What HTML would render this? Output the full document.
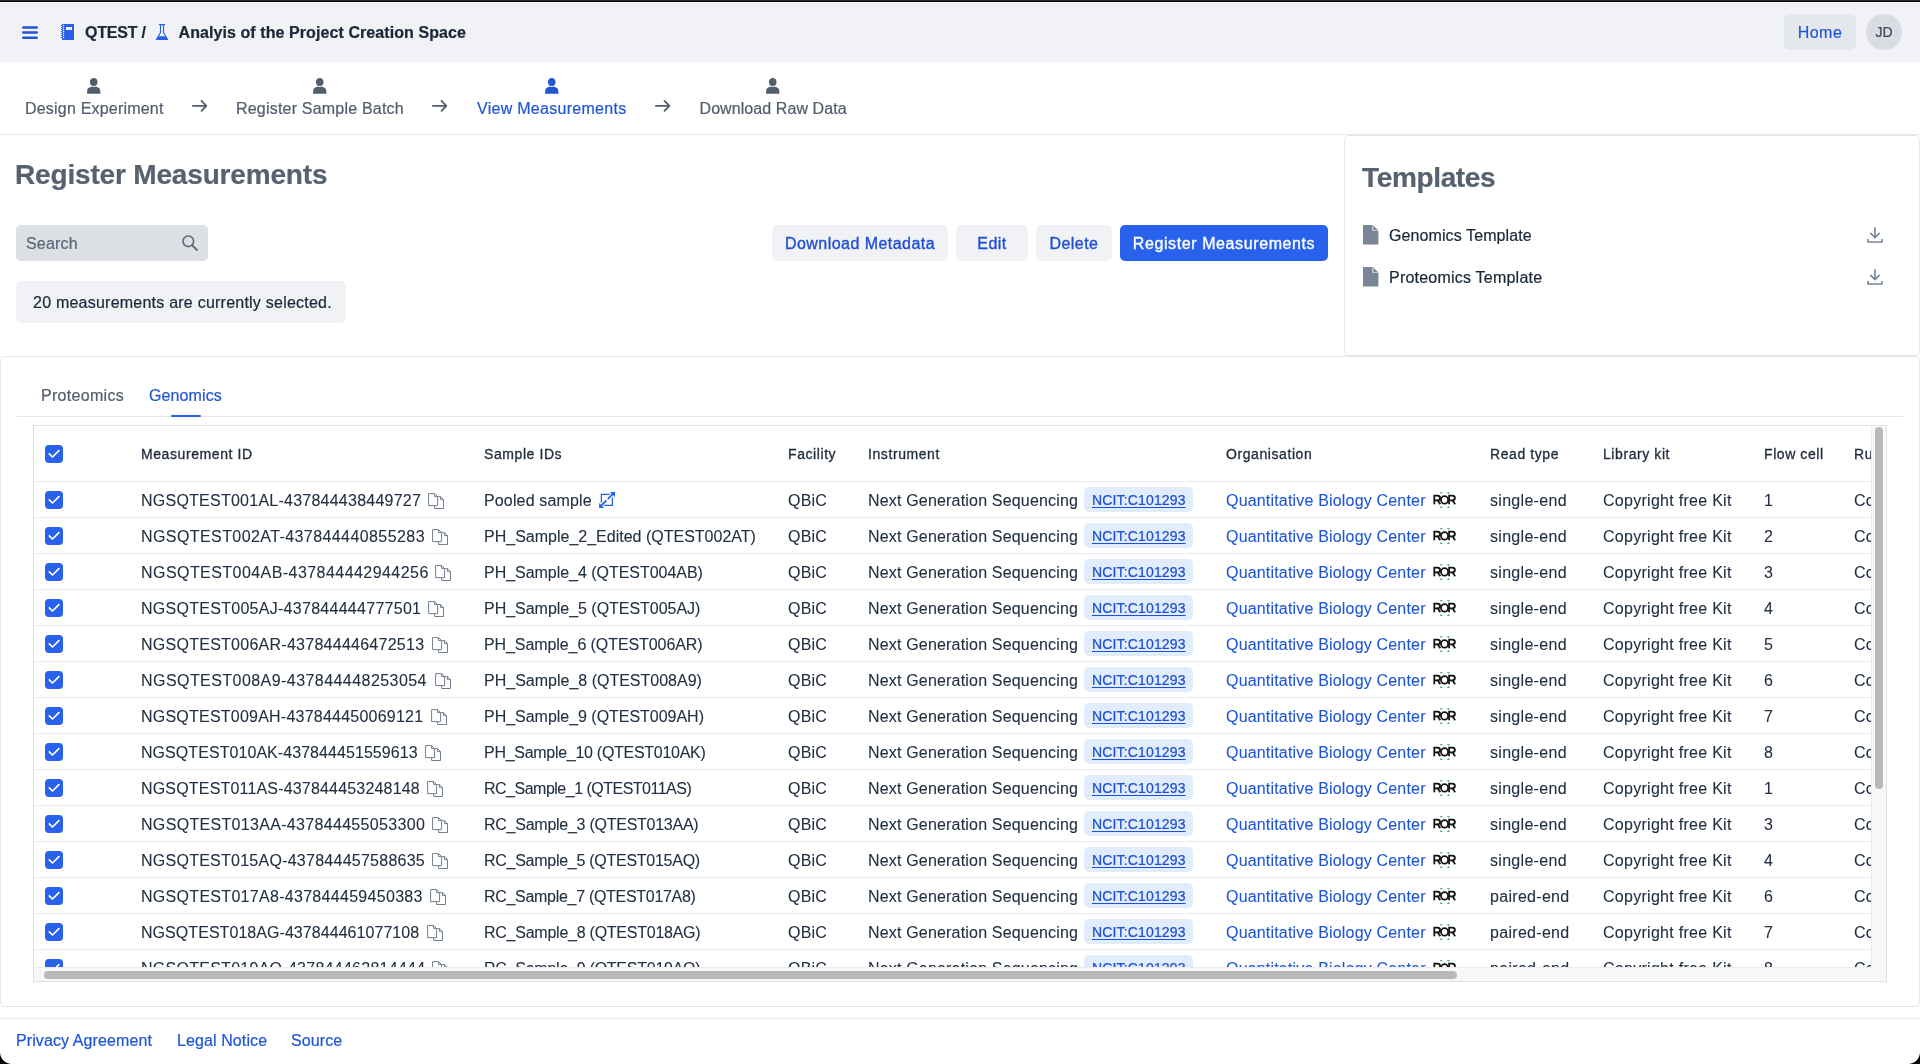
<!DOCTYPE html>
<html><head><meta charset="utf-8">
<style>
*{box-sizing:border-box;margin:0;padding:0}
html,body{width:1920px;height:1064px;overflow:hidden}
body{position:relative;background:#fff;font-family:"Liberation Sans",sans-serif;color:#1b2838;font-size:16px;letter-spacing:0.18px;-webkit-text-stroke:0.22px currentColor}
.a{position:absolute}
.t{position:absolute;white-space:nowrap;line-height:20px;height:20px}
svg{display:block}
#topbar{left:0;top:0;width:1920px;height:2px;background:linear-gradient(#28262f 0,#28262f 1px,#060606 1px,#060606 2px)}
#hdr{left:0;top:3px;width:1920px;height:59px;background:#f1f2f5}
.hb{font-weight:700;color:#1b2636;letter-spacing:0.08px}
.btn{position:absolute;height:36px;border-radius:5px;background:#f0f2f5;color:#1f4fd3;text-align:center;line-height:38px;white-space:nowrap;letter-spacing:0.45px;-webkit-text-stroke:0.35px currentColor}
.step{color:#535d6c;letter-spacing:0.2px}
.blue{color:#2356d4}
.h2{font-weight:700;font-size:28px;line-height:32px;height:32px;color:#57616f;letter-spacing:-0.35px}
.card{position:absolute;border:1px solid #e3e6eb;border-radius:5px}
#grid{position:absolute;left:34px;top:426px;width:1837px;height:541px;overflow:hidden}
.gh{position:absolute;top:18px;font-weight:400;font-size:14px;line-height:20px;color:#1f2b3b;letter-spacing:0.58px;-webkit-text-stroke:0.32px currentColor;white-space:nowrap}
.row{position:absolute;left:0;width:1837px;height:36px;border-bottom:1px solid #e7eaee}
.c{position:absolute;top:9px;white-space:nowrap;line-height:20px;height:20px;-webkit-text-stroke:0.1px currentColor;color:#223042}
.cb{position:absolute;left:11px;top:9px;width:18px;height:18px;border-radius:4px;background:#2862ec}
.cb svg{position:absolute;left:0;top:0}
.badge{position:absolute;left:1050px;top:5px;width:109px;height:25px;background:#e1ecfc;border-radius:5px;font-size:14px;color:#1d4fd8;text-decoration:underline;text-underline-offset:2px;line-height:26px;padding-left:8px;letter-spacing:0.15px}
.org{color:#1f56d6 !important}
.cp{position:absolute;top:11px}
.ror{position:absolute;left:1399px;top:9px}
</style></head><body><div id="wrap" style="position:absolute;left:0;top:0;width:1920px;height:1064px;overflow:hidden;will-change:transform">
<svg width="0" height="0" style="position:absolute"><defs>
<g id="copy" fill="none" stroke="#737f8f" stroke-width="1"><path d="M0.6 0.6H6.6L9.6 3.6V12.6H0.6Z M6.6 0.6V3.6H9.6"/><path d="M6.6 12.6V15.5H15.5V6.6L12.5 3.6H9.6 M12.5 3.6V6.6H15.5"/></g>
<g id="ror"><g fill="none" stroke="#111" stroke-width="1.75"><path d="M1.3 13.3V4.6H4.4C6.2 4.6 7.1 5.6 7.1 7C7.1 8.4 6.2 9.3 4.4 9.3H1.3M4.6 9.3L7.3 13.3"/><ellipse cx="11.55" cy="8.95" rx="3.55" ry="3.75"/><path d="M16.1 13.3V4.6H19.2C21 4.6 21.9 5.6 21.9 7C21.9 8.4 21 9.3 19.2 9.3H16.1M19.4 9.3L22.1 13.3"/></g>
<path fill="#53b99f" d="M6.6 0.9H9.8L8.2 3.1Z M13.9 0.9H17.1L15.5 3.1Z M8.2 14.8L9.8 17.1H6.6Z M15.5 14.8L17.1 17.1H13.9Z"/></g>
</defs></svg><div class="a" id="topbar"></div>
<div class="a" id="hdr"></div>
<svg class="a" style="left:20px;top:24px" width="20" height="18" viewBox="0 0 20 18">
<g stroke="#2352d6" stroke-width="2.5" stroke-linecap="round"><line x1="3.3" y1="3.5" x2="16.7" y2="3.5"/><line x1="3.3" y1="8.6" x2="16.7" y2="8.6"/><line x1="3.3" y1="13.7" x2="16.7" y2="13.7"/></g></svg>
<svg class="a" style="left:60px;top:24px" width="15" height="16" viewBox="0 0 15 16">
<path fill="#2a5fe8" d="M2 0H14V16H2Z"/>
<rect fill="#f1f2f5" x="6" y="3" width="6" height="3"/>
<g fill="#f1f2f5"><circle cx="3.5" cy="1.5" r="0.8"/><circle cx="3.5" cy="3.5" r="0.8"/><circle cx="3.5" cy="5.5" r="0.8"/><circle cx="3.5" cy="7.5" r="0.8"/><circle cx="3.5" cy="9.5" r="0.8"/><circle cx="3.5" cy="11.5" r="0.8"/><circle cx="3.5" cy="13.5" r="0.8"/></g>
<g fill="#2a5fe8"><rect x="0.8" y="1" width="1.5" height="1"/><rect x="0.8" y="3" width="1.5" height="1"/><rect x="0.8" y="5" width="1.5" height="1"/><rect x="0.8" y="7" width="1.5" height="1"/><rect x="0.8" y="9" width="1.5" height="1"/><rect x="0.8" y="11" width="1.5" height="1"/><rect x="0.8" y="13" width="1.5" height="1"/></g>
</svg>
<div class="t hb" style="left:85px;top:23px;letter-spacing:-0.2px">QTEST /</div>
<svg class="a" style="left:155px;top:24px" width="14" height="16" viewBox="0 0 14 16"><path fill="none" stroke="#2a5fe8" stroke-width="1.1" d="M5.5 1V8.6L1.6 15.3H12.4L8.5 8.6V1"/><path fill="#2a5fe8" d="M3.9 0H10.1V1.2H3.9Z M3.2 12.2H10.8L13 15.9H1Z"/></svg>
<div class="t hb" style="left:178.5px;top:23px">Analyis of the Project Creation Space</div>
<div class="btn" style="left:1784px;top:14px;width:72px;background:#e4e7eb;color:#1f56d6;letter-spacing:0.5px;line-height:38px;-webkit-text-stroke:0.2px currentColor">Home</div>
<div class="a" style="left:1866px;top:14px;width:36px;height:36px;border-radius:50%;background:#d9dde3;color:#3e4a5a;font-size:14px;text-align:center;line-height:36px;letter-spacing:0">JD</div>

<!-- stepper -->
<svg width="0" height="0" style="position:absolute"><defs>
<path id="user" d="M6.75 0C4.6 0 2.95 1.5 2.95 3.9C2.95 6 4 8.1 6.75 8.1C9.5 8.1 10.55 6 10.55 3.9C10.55 1.5 8.9 0 6.75 0Z M4.9 8.6L2.4 9.5C1.1 9.9 0.5 10.7 0.35 12L0 15.8H13.5L13.15 12C13 10.7 12.4 9.9 11.1 9.5L8.6 8.6C7.9 9.2 5.6 9.2 4.9 8.6Z"/>
<path id="arr" d="M0.9 6.9H14.3M9.5 1.9L14.4 6.9L9.5 11.9"/>
</defs></svg>
<svg class="a" style="left:87.2px;top:78px" width="14" height="16" viewBox="0 0 14 16"><use href="#user" fill="#535d6c"/></svg>
<div class="t step" style="left:25px;top:99px">Design Experiment</div>
<svg class="a" style="left:192px;top:99px" width="16" height="15" viewBox="0 0 16 15"><use href="#arr" fill="none" stroke="#535d6c" stroke-width="1.8" stroke-linecap="round" stroke-linejoin="round"/></svg>
<svg class="a" style="left:313.3px;top:78px" width="14" height="16" viewBox="0 0 14 16"><use href="#user" fill="#535d6c"/></svg>
<div class="t step" style="left:236px;top:99px">Register Sample Batch</div>
<svg class="a" style="left:432px;top:99px" width="16" height="15" viewBox="0 0 16 15"><use href="#arr" fill="none" stroke="#535d6c" stroke-width="1.8" stroke-linecap="round" stroke-linejoin="round"/></svg>
<svg class="a" style="left:545.3px;top:78px" width="14" height="16" viewBox="0 0 14 16"><use href="#user" fill="#2356d4"/></svg>
<div class="t step blue" style="left:477px;top:99px;color:#2356d4;letter-spacing:0.28px">View Measurements</div>
<svg class="a" style="left:654.5px;top:99px" width="16" height="15" viewBox="0 0 16 15"><use href="#arr" fill="none" stroke="#535d6c" stroke-width="1.8" stroke-linecap="round" stroke-linejoin="round"/></svg>
<svg class="a" style="left:766.3px;top:78px" width="14" height="16" viewBox="0 0 14 16"><use href="#user" fill="#535d6c"/></svg>
<div class="t step" style="left:699.5px;top:99px;letter-spacing:0.08px">Download Raw Data</div>
<div class="a" style="left:0;top:134px;width:1920px;height:1px;background:#e6e9ee"></div>

<!-- left section -->
<div class="t h2" style="left:15px;top:159px;letter-spacing:-0.17px">Register Measurements</div>
<div class="a" style="left:16px;top:225px;width:192px;height:36px;background:#dcdfe4;border-radius:5px"></div>
<div class="t" style="left:26px;top:234px;color:#5a6778">Search</div>
<svg class="a" style="left:181px;top:234px" width="18" height="18" viewBox="0 0 18 18"><circle cx="7.3" cy="7.3" r="5.3" fill="none" stroke="#5a6778" stroke-width="1.6"/><path d="M11.3 11.3L16 16" stroke="#5a6778" stroke-width="1.8" stroke-linecap="round"/></svg>
<div class="a" style="left:16px;top:281px;width:330px;height:41.5px;background:#f1f2f5;border-radius:5px"></div>
<div class="t" style="left:33px;top:293px;color:#1b2838;letter-spacing:0.23px">20 measurements are currently selected.</div>
<div class="btn" style="left:772px;top:225px;width:176px">Download Metadata</div>
<div class="btn" style="left:956px;top:225px;width:72px">Edit</div>
<div class="btn" style="left:1036px;top:225px;width:76px">Delete</div>
<div class="btn" style="left:1120px;top:225px;width:208px;background:#2862ec;color:#fff;letter-spacing:0.6px">Register Measurements</div>

<!-- templates card -->
<div class="card" style="left:1344px;top:135px;width:576px;height:221px"></div>
<div class="t h2" style="left:1362px;top:162px">Templates</div>
<svg width="0" height="0" style="position:absolute"><defs>
<path id="file" d="M0 0H9.5L15.4 5.8V19.5H0Z"/>
<g id="dl"><path d="M7.95 0.9V10.4M3.7 6.4L7.95 10.6L12.2 6.4" stroke-linecap="round" stroke-linejoin="round"/><path d="M0.95 12.1V14.95H14.95V12.1" stroke-linecap="butt" stroke-linejoin="miter"/></g>
</defs></svg>
<svg class="a" style="left:1363.3px;top:225.2px" width="16" height="20" viewBox="0 0 16 20"><use href="#file" fill="#7a8596"/><path d="M9.5 0V5.8H15.4" fill="#fff"/><path d="M10.3 0.5L15 5.2H10.3Z" fill="#7a8596"/></svg>
<div class="t" style="left:1389px;top:226px;color:#1b2838;letter-spacing:0.1px">Genomics Template</div>
<svg class="a" style="left:1867px;top:227px" width="16" height="16" viewBox="0 0 16 16"><use href="#dl" fill="none" stroke="#7a8596" stroke-width="1.6"/></svg>
<svg class="a" style="left:1363.3px;top:267.2px" width="16" height="20" viewBox="0 0 16 20"><use href="#file" fill="#7a8596"/><path d="M9.5 0V5.8H15.4" fill="#fff"/><path d="M10.3 0.5L15 5.2H10.3Z" fill="#7a8596"/></svg>
<div class="t" style="left:1389px;top:268px;color:#1b2838;letter-spacing:0.22px">Proteomics Template</div>
<svg class="a" style="left:1867px;top:269px" width="16" height="16" viewBox="0 0 16 16"><use href="#dl" fill="none" stroke="#7a8596" stroke-width="1.6"/></svg>

<!-- tabs card -->
<div class="card" style="left:0;top:356px;width:1920px;height:651px"></div>
<div class="t" style="left:41px;top:386px;color:#535d6c;letter-spacing:0.3px">Proteomics</div>
<div class="t" style="left:149px;top:386px;color:#2356d4;letter-spacing:0.12px">Genomics</div>
<div class="a" style="left:17px;top:416px;width:1886px;height:1px;background:#e3e6eb"></div>
<div class="a" style="left:171px;top:415px;width:30px;height:2px;border-radius:1px;background:#2862ec"></div>
<div class="a" style="left:33px;top:425px;width:1854px;height:557px;border:1px solid #dde1e6"></div>
<div id="grid">
<div class="row" style="top:0;height:56px"><div class="cb" style="top:19px"><svg width="18" height="18" viewBox="0 0 18 18"><path d="M4.3 8.9L7.5 12L13.9 5.6" fill="none" stroke="#fff" stroke-width="1.7" stroke-linecap="round" stroke-linejoin="round"/></svg></div><div class="gh" style="left:107px">Measurement ID</div><div class="gh" style="left:450px">Sample IDs</div><div class="gh" style="left:754px">Facility</div><div class="gh" style="left:834px">Instrument</div><div class="gh" style="left:1192px">Organisation</div><div class="gh" style="left:1456px">Read type</div><div class="gh" style="left:1569px">Library kit</div><div class="gh" style="left:1730px">Flow cell</div><div class="gh" style="left:1820px">Run</div></div>
<div class="row" style="top:56px"><div class="cb"><svg width="18" height="18" viewBox="0 0 18 18"><path d="M4.3 8.9L7.5 12L13.9 5.6" fill="none" stroke="#fff" stroke-width="1.7" stroke-linecap="round" stroke-linejoin="round"/></svg></div><div class="c" style="left:107px;letter-spacing:0.244px">NGSQTEST001AL-437844438449727</div><svg class="cp" style="left:394.0px" width="17" height="17" viewBox="0 0 17 17"><use href="#copy"/></svg><div class="c sid" style="left:450px;letter-spacing:0.147px">Pooled sample</div><svg class="a" style="left:565px;top:9px" width="18" height="18" viewBox="0 0 18 18"><path d="M10.7 3.4H2.4V11.5M5.1 14.3H13.4V6.4" fill="none" stroke="#2360ea" stroke-width="1.3"/><path d="M2.2 14.6L7.4 9.4M8.7 8.1L13.9 2.9" stroke="#2360ea" stroke-width="1.8"/><path d="M11 0.9H16V5.9Z M0.1 11.9V16.9H5.1Z" fill="#2360ea"/></svg><div class="c" style="left:754px">QBiC</div><div class="c" style="left:834px">Next Generation Sequencing</div><div class="badge">NCIT:C101293</div><div class="c org" style="left:1192px">Quantitative Biology Center</div><svg class="ror" width="26" height="18" viewBox="0 0 26 18"><use href="#ror"/></svg><div class="c" style="left:1456px;letter-spacing:0.3px">single-end</div><div class="c" style="left:1569px;letter-spacing:0.28px">Copyright free Kit</div><div class="c" style="left:1730px">1</div><div class="c" style="left:1820px">Copyright</div></div>
<div class="row" style="top:92px"><div class="cb"><svg width="18" height="18" viewBox="0 0 18 18"><path d="M4.3 8.9L7.5 12L13.9 5.6" fill="none" stroke="#fff" stroke-width="1.7" stroke-linecap="round" stroke-linejoin="round"/></svg></div><div class="c" style="left:107px;letter-spacing:0.416px">NGSQTEST002AT-437844440855283</div><svg class="cp" style="left:398.0px" width="17" height="17" viewBox="0 0 17 17"><use href="#copy"/></svg><div class="c sid" style="left:450px;letter-spacing:0.003px">PH_Sample_2_Edited (QTEST002AT)</div><div class="c" style="left:754px">QBiC</div><div class="c" style="left:834px">Next Generation Sequencing</div><div class="badge">NCIT:C101293</div><div class="c org" style="left:1192px">Quantitative Biology Center</div><svg class="ror" width="26" height="18" viewBox="0 0 26 18"><use href="#ror"/></svg><div class="c" style="left:1456px;letter-spacing:0.3px">single-end</div><div class="c" style="left:1569px;letter-spacing:0.28px">Copyright free Kit</div><div class="c" style="left:1730px">2</div><div class="c" style="left:1820px">Copyright</div></div>
<div class="row" style="top:128px"><div class="cb"><svg width="18" height="18" viewBox="0 0 18 18"><path d="M4.3 8.9L7.5 12L13.9 5.6" fill="none" stroke="#fff" stroke-width="1.7" stroke-linecap="round" stroke-linejoin="round"/></svg></div><div class="c" style="left:107px;letter-spacing:0.444px">NGSQTEST004AB-437844442944256</div><svg class="cp" style="left:401.0px" width="17" height="17" viewBox="0 0 17 17"><use href="#copy"/></svg><div class="c sid" style="left:450px;letter-spacing:-0.033px">PH_Sample_4 (QTEST004AB)</div><div class="c" style="left:754px">QBiC</div><div class="c" style="left:834px">Next Generation Sequencing</div><div class="badge">NCIT:C101293</div><div class="c org" style="left:1192px">Quantitative Biology Center</div><svg class="ror" width="26" height="18" viewBox="0 0 26 18"><use href="#ror"/></svg><div class="c" style="left:1456px;letter-spacing:0.3px">single-end</div><div class="c" style="left:1569px;letter-spacing:0.28px">Copyright free Kit</div><div class="c" style="left:1730px">3</div><div class="c" style="left:1820px">Copyright</div></div>
<div class="row" style="top:164px"><div class="cb"><svg width="18" height="18" viewBox="0 0 18 18"><path d="M4.3 8.9L7.5 12L13.9 5.6" fill="none" stroke="#fff" stroke-width="1.7" stroke-linecap="round" stroke-linejoin="round"/></svg></div><div class="c" style="left:107px;letter-spacing:0.280px">NGSQTEST005AJ-437844444777501</div><svg class="cp" style="left:394.0px" width="17" height="17" viewBox="0 0 17 17"><use href="#copy"/></svg><div class="c sid" style="left:450px;letter-spacing:-0.024px">PH_Sample_5 (QTEST005AJ)</div><div class="c" style="left:754px">QBiC</div><div class="c" style="left:834px">Next Generation Sequencing</div><div class="badge">NCIT:C101293</div><div class="c org" style="left:1192px">Quantitative Biology Center</div><svg class="ror" width="26" height="18" viewBox="0 0 26 18"><use href="#ror"/></svg><div class="c" style="left:1456px;letter-spacing:0.3px">single-end</div><div class="c" style="left:1569px;letter-spacing:0.28px">Copyright free Kit</div><div class="c" style="left:1730px">4</div><div class="c" style="left:1820px">Copyright</div></div>
<div class="row" style="top:200px"><div class="cb"><svg width="18" height="18" viewBox="0 0 18 18"><path d="M4.3 8.9L7.5 12L13.9 5.6" fill="none" stroke="#fff" stroke-width="1.7" stroke-linecap="round" stroke-linejoin="round"/></svg></div><div class="c" style="left:107px;letter-spacing:0.262px">NGSQTEST006AR-437844446472513</div><svg class="cp" style="left:398.0px" width="17" height="17" viewBox="0 0 17 17"><use href="#copy"/></svg><div class="c sid" style="left:450px;letter-spacing:-0.085px">PH_Sample_6 (QTEST006AR)</div><div class="c" style="left:754px">QBiC</div><div class="c" style="left:834px">Next Generation Sequencing</div><div class="badge">NCIT:C101293</div><div class="c org" style="left:1192px">Quantitative Biology Center</div><svg class="ror" width="26" height="18" viewBox="0 0 26 18"><use href="#ror"/></svg><div class="c" style="left:1456px;letter-spacing:0.3px">single-end</div><div class="c" style="left:1569px;letter-spacing:0.28px">Copyright free Kit</div><div class="c" style="left:1730px">5</div><div class="c" style="left:1820px">Copyright</div></div>
<div class="row" style="top:236px"><div class="cb"><svg width="18" height="18" viewBox="0 0 18 18"><path d="M4.3 8.9L7.5 12L13.9 5.6" fill="none" stroke="#fff" stroke-width="1.7" stroke-linecap="round" stroke-linejoin="round"/></svg></div><div class="c" style="left:107px;letter-spacing:0.444px">NGSQTEST008A9-437844448253054</div><svg class="cp" style="left:401.0px" width="17" height="17" viewBox="0 0 17 17"><use href="#copy"/></svg><div class="c sid" style="left:450px;letter-spacing:0.002px">PH_Sample_8 (QTEST008A9)</div><div class="c" style="left:754px">QBiC</div><div class="c" style="left:834px">Next Generation Sequencing</div><div class="badge">NCIT:C101293</div><div class="c org" style="left:1192px">Quantitative Biology Center</div><svg class="ror" width="26" height="18" viewBox="0 0 26 18"><use href="#ror"/></svg><div class="c" style="left:1456px;letter-spacing:0.3px">single-end</div><div class="c" style="left:1569px;letter-spacing:0.28px">Copyright free Kit</div><div class="c" style="left:1730px">6</div><div class="c" style="left:1820px">Copyright</div></div>
<div class="row" style="top:272px"><div class="cb"><svg width="18" height="18" viewBox="0 0 18 18"><path d="M4.3 8.9L7.5 12L13.9 5.6" fill="none" stroke="#fff" stroke-width="1.7" stroke-linecap="round" stroke-linejoin="round"/></svg></div><div class="c" style="left:107px;letter-spacing:0.226px">NGSQTEST009AH-437844450069121</div><svg class="cp" style="left:397.0px" width="17" height="17" viewBox="0 0 17 17"><use href="#copy"/></svg><div class="c sid" style="left:450px;letter-spacing:-0.024px">PH_Sample_9 (QTEST009AH)</div><div class="c" style="left:754px">QBiC</div><div class="c" style="left:834px">Next Generation Sequencing</div><div class="badge">NCIT:C101293</div><div class="c org" style="left:1192px">Quantitative Biology Center</div><svg class="ror" width="26" height="18" viewBox="0 0 26 18"><use href="#ror"/></svg><div class="c" style="left:1456px;letter-spacing:0.3px">single-end</div><div class="c" style="left:1569px;letter-spacing:0.28px">Copyright free Kit</div><div class="c" style="left:1730px">7</div><div class="c" style="left:1820px">Copyright</div></div>
<div class="row" style="top:308px"><div class="cb"><svg width="18" height="18" viewBox="0 0 18 18"><path d="M4.3 8.9L7.5 12L13.9 5.6" fill="none" stroke="#fff" stroke-width="1.7" stroke-linecap="round" stroke-linejoin="round"/></svg></div><div class="c" style="left:107px;letter-spacing:0.062px">NGSQTEST010AK-437844451559613</div><svg class="cp" style="left:391.0px" width="17" height="17" viewBox="0 0 17 17"><use href="#copy"/></svg><div class="c sid" style="left:450px;letter-spacing:-0.283px">PH_Sample_10 (QTEST010AK)</div><div class="c" style="left:754px">QBiC</div><div class="c" style="left:834px">Next Generation Sequencing</div><div class="badge">NCIT:C101293</div><div class="c org" style="left:1192px">Quantitative Biology Center</div><svg class="ror" width="26" height="18" viewBox="0 0 26 18"><use href="#ror"/></svg><div class="c" style="left:1456px;letter-spacing:0.3px">single-end</div><div class="c" style="left:1569px;letter-spacing:0.28px">Copyright free Kit</div><div class="c" style="left:1730px">8</div><div class="c" style="left:1820px">Copyright</div></div>
<div class="row" style="top:344px"><div class="cb"><svg width="18" height="18" viewBox="0 0 18 18"><path d="M4.3 8.9L7.5 12L13.9 5.6" fill="none" stroke="#fff" stroke-width="1.7" stroke-linecap="round" stroke-linejoin="round"/></svg></div><div class="c" style="left:107px;letter-spacing:0.180px">NGSQTEST011AS-437844453248148</div><svg class="cp" style="left:393.0px" width="17" height="17" viewBox="0 0 17 17"><use href="#copy"/></svg><div class="c sid" style="left:450px;letter-spacing:-0.503px">RC_Sample_1 (QTEST011AS)</div><div class="c" style="left:754px">QBiC</div><div class="c" style="left:834px">Next Generation Sequencing</div><div class="badge">NCIT:C101293</div><div class="c org" style="left:1192px">Quantitative Biology Center</div><svg class="ror" width="26" height="18" viewBox="0 0 26 18"><use href="#ror"/></svg><div class="c" style="left:1456px;letter-spacing:0.3px">single-end</div><div class="c" style="left:1569px;letter-spacing:0.28px">Copyright free Kit</div><div class="c" style="left:1730px">1</div><div class="c" style="left:1820px">Copyright</div></div>
<div class="row" style="top:380px"><div class="cb"><svg width="18" height="18" viewBox="0 0 18 18"><path d="M4.3 8.9L7.5 12L13.9 5.6" fill="none" stroke="#fff" stroke-width="1.7" stroke-linecap="round" stroke-linejoin="round"/></svg></div><div class="c" style="left:107px;letter-spacing:0.319px">NGSQTEST013AA-437844455053300</div><svg class="cp" style="left:398.0px" width="17" height="17" viewBox="0 0 17 17"><use href="#copy"/></svg><div class="c sid" style="left:450px;letter-spacing:-0.255px">RC_Sample_3 (QTEST013AA)</div><div class="c" style="left:754px">QBiC</div><div class="c" style="left:834px">Next Generation Sequencing</div><div class="badge">NCIT:C101293</div><div class="c org" style="left:1192px">Quantitative Biology Center</div><svg class="ror" width="26" height="18" viewBox="0 0 26 18"><use href="#ror"/></svg><div class="c" style="left:1456px;letter-spacing:0.3px">single-end</div><div class="c" style="left:1569px;letter-spacing:0.28px">Copyright free Kit</div><div class="c" style="left:1730px">3</div><div class="c" style="left:1820px">Copyright</div></div>
<div class="row" style="top:416px"><div class="cb"><svg width="18" height="18" viewBox="0 0 18 18"><path d="M4.3 8.9L7.5 12L13.9 5.6" fill="none" stroke="#fff" stroke-width="1.7" stroke-linecap="round" stroke-linejoin="round"/></svg></div><div class="c" style="left:107px;letter-spacing:0.255px">NGSQTEST015AQ-437844457588635</div><svg class="cp" style="left:398.0px" width="17" height="17" viewBox="0 0 17 17"><use href="#copy"/></svg><div class="c sid" style="left:450px;letter-spacing:-0.268px">RC_Sample_5 (QTEST015AQ)</div><div class="c" style="left:754px">QBiC</div><div class="c" style="left:834px">Next Generation Sequencing</div><div class="badge">NCIT:C101293</div><div class="c org" style="left:1192px">Quantitative Biology Center</div><svg class="ror" width="26" height="18" viewBox="0 0 26 18"><use href="#ror"/></svg><div class="c" style="left:1456px;letter-spacing:0.3px">single-end</div><div class="c" style="left:1569px;letter-spacing:0.28px">Copyright free Kit</div><div class="c" style="left:1730px">4</div><div class="c" style="left:1820px">Copyright</div></div>
<div class="row" style="top:452px"><div class="cb"><svg width="18" height="18" viewBox="0 0 18 18"><path d="M4.3 8.9L7.5 12L13.9 5.6" fill="none" stroke="#fff" stroke-width="1.7" stroke-linecap="round" stroke-linejoin="round"/></svg></div><div class="c" style="left:107px;letter-spacing:0.298px">NGSQTEST017A8-437844459450383</div><svg class="cp" style="left:396.0px" width="17" height="17" viewBox="0 0 17 17"><use href="#copy"/></svg><div class="c sid" style="left:450px;letter-spacing:-0.298px">RC_Sample_7 (QTEST017A8)</div><div class="c" style="left:754px">QBiC</div><div class="c" style="left:834px">Next Generation Sequencing</div><div class="badge">NCIT:C101293</div><div class="c org" style="left:1192px">Quantitative Biology Center</div><svg class="ror" width="26" height="18" viewBox="0 0 26 18"><use href="#ror"/></svg><div class="c" style="left:1456px;letter-spacing:0.3px">paired-end</div><div class="c" style="left:1569px;letter-spacing:0.28px">Copyright free Kit</div><div class="c" style="left:1730px">6</div><div class="c" style="left:1820px">Copyright</div></div>
<div class="row" style="top:488px"><div class="cb"><svg width="18" height="18" viewBox="0 0 18 18"><path d="M4.3 8.9L7.5 12L13.9 5.6" fill="none" stroke="#fff" stroke-width="1.7" stroke-linecap="round" stroke-linejoin="round"/></svg></div><div class="c" style="left:107px;letter-spacing:0.055px">NGSQTEST018AG-437844461077108</div><svg class="cp" style="left:393.0px" width="17" height="17" viewBox="0 0 17 17"><use href="#copy"/></svg><div class="c sid" style="left:450px;letter-spacing:-0.246px">RC_Sample_8 (QTEST018AG)</div><div class="c" style="left:754px">QBiC</div><div class="c" style="left:834px">Next Generation Sequencing</div><div class="badge">NCIT:C101293</div><div class="c org" style="left:1192px">Quantitative Biology Center</div><svg class="ror" width="26" height="18" viewBox="0 0 26 18"><use href="#ror"/></svg><div class="c" style="left:1456px;letter-spacing:0.3px">paired-end</div><div class="c" style="left:1569px;letter-spacing:0.28px">Copyright free Kit</div><div class="c" style="left:1730px">7</div><div class="c" style="left:1820px">Copyright</div></div>
<div class="row" style="top:524px"><div class="cb"><svg width="18" height="18" viewBox="0 0 18 18"><path d="M4.3 8.9L7.5 12L13.9 5.6" fill="none" stroke="#fff" stroke-width="1.7" stroke-linecap="round" stroke-linejoin="round"/></svg></div><div class="c" style="left:107px;letter-spacing:0.269px">NGSQTEST019AQ-437844462814444</div><svg class="cp" style="left:398.0px" width="17" height="17" viewBox="0 0 17 17"><use href="#copy"/></svg><div class="c sid" style="left:450px;letter-spacing:-0.246px">RC_Sample_9 (QTEST019AQ)</div><div class="c" style="left:754px">QBiC</div><div class="c" style="left:834px">Next Generation Sequencing</div><div class="badge">NCIT:C101293</div><div class="c org" style="left:1192px">Quantitative Biology Center</div><svg class="ror" width="26" height="18" viewBox="0 0 26 18"><use href="#ror"/></svg><div class="c" style="left:1456px;letter-spacing:0.3px">paired-end</div><div class="c" style="left:1569px;letter-spacing:0.28px">Copyright free Kit</div><div class="c" style="left:1730px">8</div><div class="c" style="left:1820px">Copyright</div></div>
</div>
<div class="a" style="left:1871px;top:426px;width:15px;height:541px;background:#f8f8f8;border-left:1px solid #ececec"></div>
<div class="a" style="left:1871px;top:967px;width:15px;height:14px;background:#f8f8f8"></div>
<div class="a" style="left:1875px;top:427px;width:8px;height:362px;border-radius:4px;background:#b9b9b9"></div>
<div class="a" style="left:34px;top:967px;width:1837px;height:14px;background:#f8f8f8;border-top:1px solid #ececec"></div>
<div class="a" style="left:44px;top:971px;width:1413px;height:8px;border-radius:4px;background:#b9b9b9"></div>
<div class="a" style="left:0;top:1018px;width:1920px;height:1px;background:#e6e9ee"></div>
<div class="t" style="left:16px;top:1031px;color:#1f56d6;letter-spacing:0.1px">Privacy Agreement</div>
<div class="t" style="left:177px;top:1031px;color:#1f56d6;letter-spacing:0.1px">Legal Notice</div>
<div class="t" style="left:291px;top:1031px;color:#1f56d6;letter-spacing:0.1px">Source</div>
<svg class="a" style="left:0;top:1052px" width="12" height="12" viewBox="0 0 12 12"><path d="M0 0V12H12C5.4 12 0 6.6 0 0Z" fill="#000"/></svg>
<svg class="a" style="left:1908px;top:1052px" width="12" height="12" viewBox="0 0 12 12"><path d="M12 0V12H0C6.6 12 12 6.6 12 0Z" fill="#000"/></svg>
</div></body></html>
